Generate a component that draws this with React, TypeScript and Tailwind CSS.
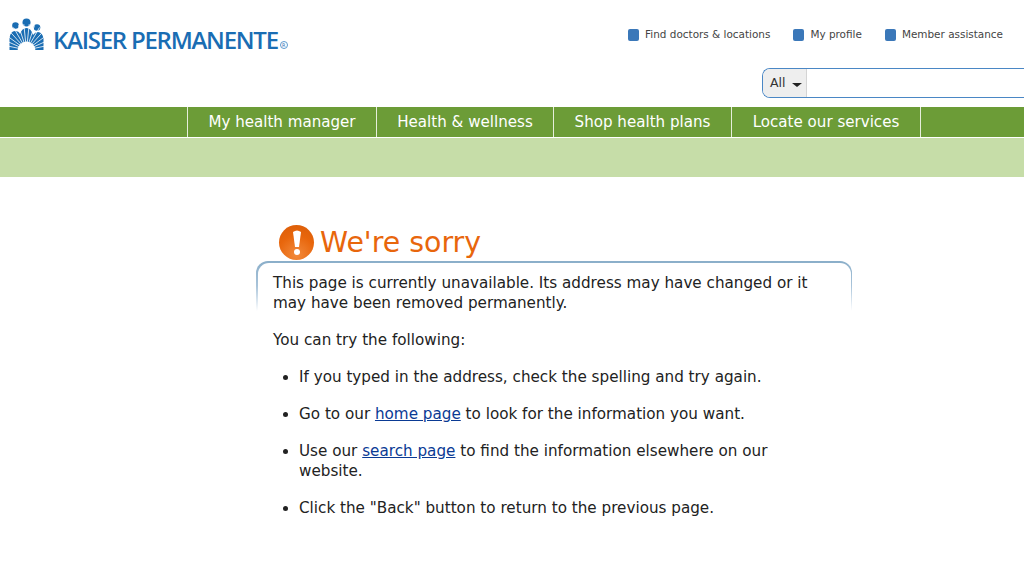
const navItems = ["My health manager", "Health & wellness", "Shop health plans", "Locate our services"];
const navWidths = ["w-[189px]", "w-[177px]", "w-[178px]", "w-[190px]"];
const topLinks = [
    { label: "Find doctors & locations", cls: "mr-[23px]" },
    { label: "My profile", cls: "mr-[23px]" },
    { label: "Member assistance", cls: "" },
];

function LogoMark() {
    const rays = [-78, -66, -54, -42, -30, -18, -6, 6, 18, 30, 42, 54, 66, 78];
    return (
        <svg width="36" height="33" viewBox="0 0 36 33" className="shrink-0">
            <circle cx="6.5" cy="7.5" r="3.3" fill="#1a6db3" />
            <circle cx="17.5" cy="4.5" r="4" fill="#1a6db3" />
            <circle cx="28" cy="9.5" r="3.3" fill="#1a6db3" />
            <path d="M0.5 32 V20 Q1.5 13 6 13 Q10 13 11 16 Q13 10 17.5 10 Q22 10 24 17 Q26 14 29 14 Q33 14 34.5 20 V32 Z" fill="#1a6db3" />
            {rays.map((a) => (
                <line
                    key={a}
                    x1={17.5 + 6 * Math.sin((a * Math.PI) / 180)}
                    y1={32 - 6 * Math.cos((a * Math.PI) / 180)}
                    x2={17.5 + 26 * Math.sin((a * Math.PI) / 180)}
                    y2={32 - 26 * Math.cos((a * Math.PI) / 180)}
                    stroke="#fff"
                    strokeWidth="0.8"
                />
            ))}
            <path d="M8.5 32.5 A9 9 0 0 1 26.5 32.5 Z" fill="#fff" />
        </svg>
    );
}

export default function App() {
    return (
        <div className="min-h-[576px] bg-white font-['DejaVu_Sans',sans-serif] text-[#222] overflow-hidden">
            {/* Header */}
            <div className="h-[107px] flex justify-between">
                <div className="flex items-start pl-[9px] pt-[18px]">
                    <LogoMark />
                    <span className="ml-[8px] mt-[7px] font-['Open_Sans',sans-serif] font-semibold text-[24px] leading-[30px] tracking-[-1.25px] text-[#1a6db3] whitespace-nowrap">
                        KAISER PERMANENTE
                    </span>
                    <span className="mt-[23px] ml-[2px] w-[8px] h-[8px] rounded-full border border-[#5d9ad0] text-[5px] leading-[6px] text-center text-[#1a6db3]">
                        R
                    </span>
                </div>
                <div className="flex flex-col items-end">
                    <div className="flex pt-[28px] pr-[21px] h-[68px] items-start">
                        {topLinks.map((l) => (
                            <div key={l.label} className={`flex items-center gap-[6px] h-[13px] ${l.cls}`}>
                                <span className="w-[11px] h-[12px] rounded-[2px] bg-[#3b78b9]" />
                                <span className="text-[10.45px] leading-[13px] text-[#444] whitespace-nowrap">{l.label}</span>
                            </div>
                        ))}
                    </div>
                    <div className="w-[262px] h-[30px] flex border border-r-0 border-[#4a87c5] rounded-l-[8px] overflow-hidden">
                        <div className="w-[44px] bg-[#eeeeee] border-r border-[#d4d4d4] flex items-center pl-[7px] gap-[6px]">
                            <span className="text-[12.5px] text-[#333]">All</span>
                            <span className="w-0 h-0 mt-[3px] border-x-[5px] border-x-transparent border-t-[4px] border-t-[#222]" />
                        </div>
                    </div>
                </div>
            </div>

            {/* Nav */}
            <div className="h-[31px] bg-[#6c9c37] border-b border-white flex pl-[187px]">
                {navItems.map((item, i) => (
                    <div
                        key={item}
                        className={`${navWidths[i]} border-l border-[#e6eedb] flex items-center justify-center text-[15.1px] text-white whitespace-nowrap ${i === 3 ? "border-r" : ""}`}
                    >
                        {item}
                    </div>
                ))}
            </div>
            <div className="h-[39px] bg-[#c6dda8]" />

            {/* Message */}
            <div className="ml-[256px] w-[596px] pt-[47px]">
                <div className="flex items-center pl-[23px] h-[37px]">
                    <div className="w-[35px] h-[35px] rounded-full bg-[radial-gradient(circle_at_50%_85%,#f28a3c,#e8660c_55%,#d95c08)] flex items-center justify-center shrink-0">
                        <svg width="10" height="26" viewBox="0 0 10 26">
                            <path d="M1 2 Q5 -1 9 2 L7 17 H3 Z" fill="#fff" />
                            <circle cx="5" cy="22" r="3" fill="#fff" />
                        </svg>
                    </div>
                    <h1 className="ml-[6px] text-[28.4px] leading-[36px] text-[#e8660c]">We're sorry</h1>
                </div>
                <div className="relative pt-[12px] px-[17px] text-[15.2px] leading-[20px]">
                    <div className="absolute top-0 left-0 right-0 h-[50px] rounded-t-[12px] bg-gradient-to-b from-[#8aaec9] via-[#a9c4da] to-white p-[1.5px] pb-0">
                        <div className="h-full rounded-t-[11px] bg-white" />
                    </div>
                    <p className="relative">
                        This page is currently unavailable. Its address may have changed or it may have been removed permanently.
                    </p>
                    <p className="mt-[17px]">You can try the following:</p>
                    <ul className="mt-[17px] list-disc pl-[26px] flex flex-col gap-[17px]">
                        <li>If you typed in the address, check the spelling and try again.</li>
                        <li>
                            Go to our <a className="text-[#0a3a94] underline">home page</a> to look for the information you want.
                        </li>
                        <li>
                            Use our <a className="text-[#0a3a94] underline">search page</a> to find the information elsewhere on our website.
                        </li>
                        <li>Click the "Back" button to return to the previous page.</li>
                    </ul>
                </div>
            </div>
        </div>
    );
}
